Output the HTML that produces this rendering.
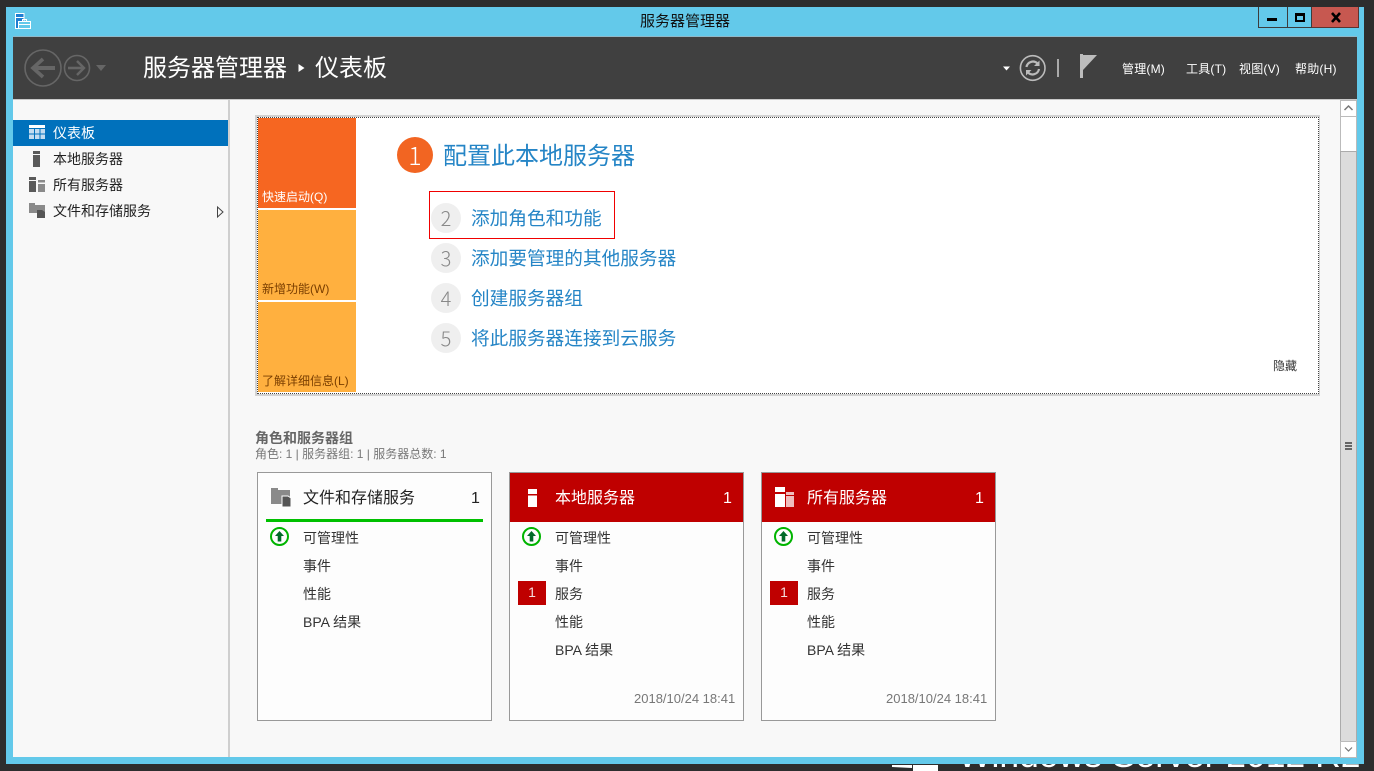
<!DOCTYPE html>
<html lang="zh-CN"><head><meta charset="utf-8"><title>服务器管理器</title>
<style>
html,body{margin:0;padding:0;width:1374px;height:771px;overflow:hidden;background:#2d2d2d}
body{position:relative;font-family:"Liberation Sans","Noto Sans CJK SC",sans-serif;color:#222}
div,a,svg{position:absolute}
svg{overflow:visible}
.t{white-space:nowrap;line-height:20px;height:20px}
.card{background:#fdfdfd;border:1px solid #999;box-sizing:border-box;top:472px;width:235px;height:249px}
.red{background:#bf0000;top:473px;height:49px;width:233px}
.ct{font-size:16px;line-height:20px;top:489px;white-space:nowrap}
.it{font-size:14px;color:#333;white-space:nowrap;line-height:20px}
.lnk{font-size:18.67px;color:#2585c6;white-space:nowrap;line-height:26px;left:471px}
.num{left:431px;width:30px;height:30px;border-radius:15px;background:#efefef;color:#888;font-family:"Noto Sans CJK SC","Liberation Sans",sans-serif;font-weight:300;font-size:20px;line-height:30px;text-align:center}
.m{font-size:12px;color:#fff;top:59px;letter-spacing:.2px}
.side{font-size:14px;left:53px;color:#222}
.tile{left:258px;width:98px;height:90px;background:#ffb03f}
.tl{left:262px;font-size:12px;color:#7a3e00}
.dt{font-size:13px;color:#777;top:689px;white-space:nowrap;line-height:20px}
</style></head><body>

<!-- wallpaper fragments -->
<svg style="left:885px;top:764px" width="60" height="7"><path d="M7 1h20v3l-20-1z" fill="#fff"/><rect x="28" y="1" width="25" height="6" fill="#fff"/></svg>
<div style="left:950px;top:764px;width:410px;height:7px;overflow:hidden">
 <div class="t" style="left:8px;top:-31px;font-size:35.5px;line-height:44px;height:44px;color:#fff">Windows Server 2012 R2</div>
</div>

<!-- window frame -->
<div style="left:6px;top:7px;width:1358px;height:757px;background:#63c9ea"></div>
<div style="left:13px;top:36px;width:1344px;height:1px;background:#8fb9c9"></div>

<!-- app icon -->
<svg style="left:0;top:0" width="40" height="36">
 <rect x="15.500" y="13.500" width="8.500" height="15" fill="#1e7ed2" stroke="#fff"/>
 <rect x="16" y="17" width="8" height="1" fill="#fff"/>
 <rect x="18.500" y="21.500" width="12" height="7" fill="#63c9ea" stroke="#fff"/>
 <path d="M22.500 21.500v-2h4v2M18.500 24.500h12" fill="none" stroke="#fff"/>
</svg>

<div class="t" style="left:640px;top:12px;font-size:15px;color:#111">服务器管理器</div>

<!-- window buttons -->
<div style="left:1258px;top:7px;width:28px;height:20px;border:1px solid #3c3c3c;border-top:0;box-sizing:content-box"></div>
<div style="left:1286px;top:7px;width:25px;height:20px;border:1px solid #3c3c3c;border-top:0;border-left:0"></div>
<div style="left:1312px;top:7px;width:46px;height:20px;background:#c75850;border:1px solid #5c3330;border-top:0;border-left:0"></div>
<div style="left:1267px;top:18px;width:10px;height:3px;background:#000"></div>
<div style="left:1295px;top:13px;width:6px;height:4px;border:2px solid #000;border-top-width:3px"></div>
<svg style="left:1330px;top:12px" width="14" height="12"><path d="M2 1l8 9M10 1l-8 9" stroke="#000" stroke-width="2.600" fill="none"/></svg>

<!-- header -->
<div style="left:13px;top:37px;width:1344px;height:62px;background:#404040"></div>
<div style="left:13px;top:99px;width:1344px;height:1px;background:#c9c9c9"></div>

<svg style="left:0;top:37px" width="120" height="62">
 <g transform="translate(0,-37)" fill="none" stroke="#666">
  <circle cx="43" cy="68" r="18" stroke-width="1.600"/>
  <circle cx="77" cy="68" r="12.500" stroke-width="1.600"/>
  <path d="M33 68h22" stroke-width="4"/>
  <path d="M43 59l-10 9 10 9" stroke-width="3.600"/>
  <path d="M68 68h16" stroke-width="2.600"/>
  <path d="M77 61l7 7-7 7" stroke-width="2.400"/>
  <path d="M96 65h10l-5 6z" fill="#666" stroke="none"/>
 </g>
</svg>
<div class="t" style="left:143px;top:53px;font-size:24px;line-height:32px;height:32px;color:#fff">服务器管理器</div>
<svg style="left:296px;top:62px" width="12" height="12"><path d="M2.500 2l6 4-6 4z" fill="#fff"/></svg>
<div class="t" style="left:315px;top:53px;font-size:24px;line-height:32px;height:32px;color:#fff">仪表板</div>

<svg style="left:1000px;top:50px" width="105" height="32">
 <g transform="translate(-1000,-50)">
  <path d="M1003 66.500h7l-3.500 4z" fill="#fff"/>
  <circle cx="1032.700" cy="68" r="12.300" fill="none" stroke="#bbb" stroke-width="1.600"/>
  <path d="M1026.500 67a6.500 6.500 0 0 1 11-3.500" fill="none" stroke="#bbb" stroke-width="2.200"/>
  <path d="M1039.500 60.500v5.500h-5.500z" fill="#bbb"/>
  <path d="M1039 69a6.500 6.500 0 0 1-11 3.500" fill="none" stroke="#bbb" stroke-width="2.200"/>
  <path d="M1026 75.500v-5.500h5.500z" fill="#bbb"/>
  <rect x="1057" y="59" width="2" height="18" fill="#aaa"/>
  <rect x="1080" y="54" width="3" height="24" fill="#bdbdbd"/>
  <path d="M1083 55h14l-14 15z" fill="#bdbdbd"/>
 </g>
</svg>
<div class="t m" style="left:1122px">管理(M)</div>
<div class="t m" style="left:1186px">工具(T)</div>
<div class="t m" style="left:1239px">视图(V)</div>
<div class="t m" style="left:1295px">帮助(H)</div>

<!-- content -->
<div style="left:13px;top:100px;width:1344px;height:657px;background:#f8f8f8"></div>
<div style="left:228px;top:100px;width:2px;height:657px;background:#cfcfcf"></div>

<!-- sidebar -->
<div style="left:13px;top:120px;width:215px;height:26px;background:#0071bc"></div>
<svg style="left:0;top:100px" width="230" height="130">
 <g transform="translate(0,-100)">
  <rect x="29" y="125" width="16" height="3" fill="#fff"/>
  <g fill="#c3dcf0">
   <rect x="29" y="129" width="5" height="4.500"/><rect x="35" y="129" width="4.500" height="4.500"/><rect x="40.500" y="129" width="4.500" height="4.500"/>
   <rect x="29" y="134.500" width="5" height="4.500"/><rect x="35" y="134.500" width="4.500" height="4.500"/><rect x="40.500" y="134.500" width="4.500" height="4.500"/>
  </g>
  <rect x="33" y="151" width="7" height="3" fill="#5a5a5a"/>
  <rect x="33" y="155" width="7" height="12" fill="#5a5a5a"/>
  <rect x="29" y="177" width="7" height="3" fill="#5a5a5a"/>
  <rect x="29" y="181" width="7" height="11" fill="#5a5a5a"/>
  <rect x="38" y="180" width="7" height="2.500" fill="#8a8a8a"/>
  <rect x="38" y="184" width="7" height="8" fill="#8a8a8a"/>
  <path d="M29 203h6v2h10v10h-6v-2h-10z" fill="#8a8a8a"/>
  <path d="M37 210h5l3 2v6h-8z" fill="#555"/>
  <path d="M217.500 207l5.500 5-5.500 5z" fill="#f8f8f8" stroke="#444"/>
 </g>
</svg>
<div class="t side" style="top:123px;color:#fff">仪表板</div>
<div class="t side" style="top:149px">本地服务器</div>
<div class="t side" style="top:175px">所有服务器</div>
<div class="t side" style="top:201px">文件和存储服务</div>

<!-- quick start panel -->
<div style="left:255px;top:115px;width:1065px;height:281px;background:#d2d2d2"></div>
<div style="left:257px;top:117px;width:1060px;height:275px;background:#fff;border:1px dotted #444"></div>
<div class="tile" style="top:118px;background:#f66621"></div>
<div class="tile" style="top:210px"></div>
<div class="tile" style="top:302px"></div>
<div class="t tl" style="top:187px;color:#fff">快速启动(Q)</div>
<div class="t tl" style="top:279px">新增功能(W)</div>
<div class="t tl" style="top:371px">了解详细信息(L)</div>

<div style="left:397px;top:137px;width:36px;height:36px;border-radius:18px;background:#f26522;color:#fff;font-family:'Noto Sans CJK SC','Liberation Sans',sans-serif;font-weight:300;font-size:25px;line-height:36px;text-align:center">1</div>
<div class="t" style="left:443px;top:141px;font-size:24px;line-height:32px;height:32px;color:#2585c6">配置此本地服务器</div>
<div style="left:429px;top:191px;width:184px;height:46px;border:1px solid #f00000"></div>
<div class="num" style="top:203px">2</div><div class="lnk" style="top:206px">添加角色和功能</div>
<div class="num" style="top:243px">3</div><div class="lnk" style="top:246px">添加要管理的其他服务器</div>
<div class="num" style="top:283px">4</div><div class="lnk" style="top:286px">创建服务器组</div>
<div class="num" style="top:323px">5</div><div class="lnk" style="top:326px">将此服务器连接到云服务</div>
<div class="t" style="left:1273px;top:356px;font-size:12px;color:#333">隐藏</div>

<!-- group heading -->
<div class="t" style="left:255px;top:428px;font-size:14px;font-weight:bold;color:#666">角色和服务器组</div>
<div class="t" style="left:255px;top:444px;font-size:12px;color:#777">角色: 1 | 服务器组: 1 | 服务器总数: 1</div>

<!-- card 1 -->
<div class="card" style="left:257px"></div>
<svg style="left:270px;top:487px" width="24" height="22">
 <path d="M1 1h7v2h12v11h-7v3h-12z" fill="#8a8a8a"/>
 <path d="M12 9h6l3 2v9h-9z" fill="#555" stroke="#fdfdfd"/>
</svg>
<div class="ct" style="left:303px;color:#222">文件和存储服务</div>
<div class="ct" style="left:471px;color:#222">1</div>
<div style="left:266px;top:519px;width:217px;height:3px;background:#00c000"></div>

<!-- card 2 -->
<div class="card" style="left:509px"></div>
<div class="red" style="left:510px"></div>
<svg style="left:510px;top:473px" width="40" height="49">
 <rect x="18" y="16" width="9" height="5" fill="#fff"/><rect x="18" y="22.500" width="9" height="11.500" fill="#fff"/>
</svg>
<div class="ct" style="left:555px;color:#fff">本地服务器</div>
<div class="ct" style="left:723px;color:#fff">1</div>

<!-- card 3 -->
<div class="card" style="left:761px"></div>
<div class="red" style="left:762px"></div>
<svg style="left:762px;top:473px" width="40" height="49">
 <rect x="13" y="14" width="10" height="5" fill="#fff"/><rect x="13" y="21" width="10" height="13" fill="#fff"/>
 <rect x="24" y="19" width="8" height="3" fill="#efbcbc"/><rect x="24" y="23" width="8" height="11" fill="#efbcbc"/>
</svg>
<div class="ct" style="left:807px;color:#fff">所有服务器</div>
<div class="ct" style="left:975px;color:#fff">1</div>

<!-- green status icons -->
<svg style="left:0;top:520px" width="1000" height="34">
 <g fill="none" stroke="#00b400" stroke-width="2">
  <circle cx="279.500" cy="16.500" r="8.500"/><circle cx="531.500" cy="16.500" r="8.500"/><circle cx="783.500" cy="16.500" r="8.500"/>
 </g>
 <g fill="#006a28">
  <path d="M279.500 11l4.500 5h-2.700v5.500h-3.600v-5.500h-2.700z"/>
  <path d="M531.500 11l4.500 5h-2.700v5.500h-3.600v-5.500h-2.700z"/>
  <path d="M783.500 11l4.500 5h-2.700v5.500h-3.600v-5.500h-2.700z"/>
 </g>
</svg>

<!-- card 1 items -->
<div class="it" style="left:303px;top:528px">可管理性</div>
<div class="it" style="left:303px;top:556px">事件</div>
<div class="it" style="left:303px;top:584px">性能</div>
<div class="it" style="left:303px;top:612px">BPA 结果</div>

<!-- card 2 items -->
<div class="it" style="left:555px;top:528px">可管理性</div>
<div class="it" style="left:555px;top:556px">事件</div>
<div style="left:518px;top:581px;width:28px;height:24px;background:#bf0000;color:#f3dcdc;font-size:14px;line-height:23px;text-align:center">1</div>
<div class="it" style="left:555px;top:584px">服务</div>
<div class="it" style="left:555px;top:612px">性能</div>
<div class="it" style="left:555px;top:640px">BPA 结果</div>
<div class="dt" style="left:634px">2018/10/24 18:41</div>

<!-- card 3 items -->
<div class="it" style="left:807px;top:528px">可管理性</div>
<div class="it" style="left:807px;top:556px">事件</div>
<div style="left:770px;top:581px;width:28px;height:24px;background:#bf0000;color:#f3dcdc;font-size:14px;line-height:23px;text-align:center">1</div>
<div class="it" style="left:807px;top:584px">服务</div>
<div class="it" style="left:807px;top:612px">性能</div>
<div class="it" style="left:807px;top:640px">BPA 结果</div>
<div class="dt" style="left:886px">2018/10/24 18:41</div>

<!-- scrollbar -->
<div style="left:1340px;top:100px;width:17px;height:657px;background:#fff"></div>
<div style="left:1340px;top:151px;width:15px;height:590px;background:#dcdcdc;border:1px solid #ababab;box-sizing:content-box"></div>
<div style="left:1340px;top:100px;width:15px;height:15px;background:#fff;border:1px solid #bbb"></div>
<div style="left:1340px;top:116px;width:1px;height:35px;background:#bbb"></div>
<div style="left:1356px;top:116px;width:1px;height:35px;background:#bbb"></div>
<div style="left:1340px;top:741px;width:15px;height:15px;background:#fff;border:1px solid #bbb"></div>
<svg style="left:1340px;top:100px" width="17" height="17"><path d="M4.500 10l4-4 4 4" fill="none" stroke="#777" stroke-width="1.500"/></svg>
<svg style="left:1340px;top:741px" width="17" height="17"><path d="M5 6.500l3.500 3.500 3.500-3.500" fill="none" stroke="#777" stroke-width="1.200"/></svg>
<div style="left:1345px;top:442px;width:7px;height:1.500px;background:#666"></div>
<div style="left:1345px;top:445px;width:7px;height:1.500px;background:#666"></div>
<div style="left:1345px;top:448px;width:7px;height:1.500px;background:#666"></div>

</body></html>
